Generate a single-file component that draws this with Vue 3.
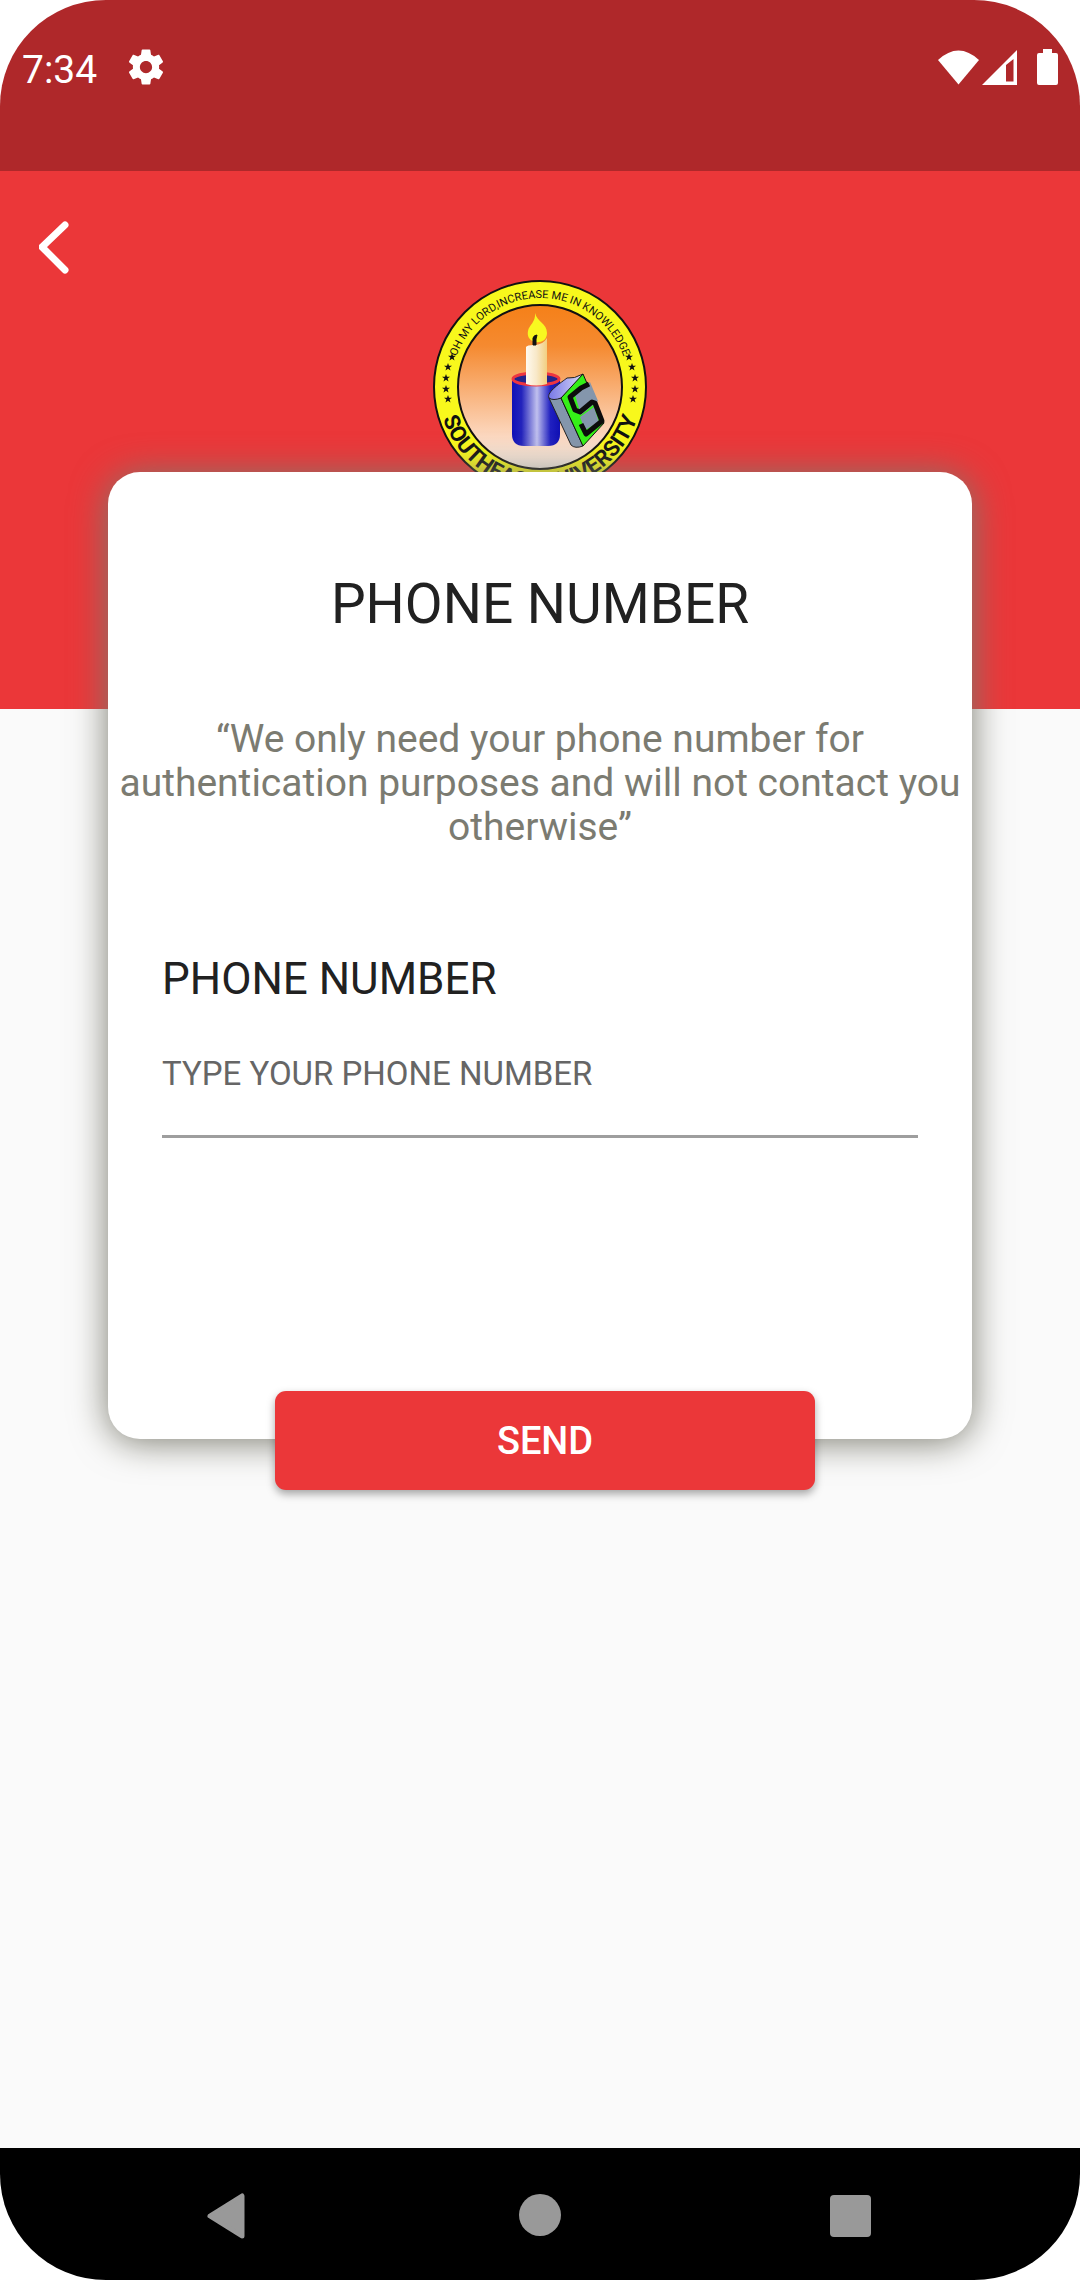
<script setup>
import { ref } from 'vue'

const phone = ref('')

const stars = [
  [20, 78], [16, 88], [14, 99], [14, 110], [16, 120],
  [197, 78], [200, 88], [203, 99], [203, 110], [201, 120],
]
</script>

<template>
  <div class="screen">
    <header class="status">
      <div class="status-group">
        <time class="clock">7:34</time>
        <svg class="gear" viewBox="0 0 24 24" aria-hidden="true">
          <path fill="#fff" d="M19.43 12.98c.04-.32.07-.64.07-.98s-.03-.66-.07-.98l2.11-1.65c.19-.15.24-.42.12-.64l-2-3.46c-.12-.22-.39-.3-.61-.22l-2.49 1c-.52-.4-1.08-.73-1.69-.98l-.38-2.65C14.46 2.18 14.25 2 14 2h-4c-.25 0-.46.18-.49.42l-.38 2.65c-.61.25-1.17.59-1.69.98l-2.49-1c-.23-.09-.49 0-.61.22l-2 3.46c-.13.22-.07.49.12.64l2.11 1.65c-.04.32-.07.65-.07.98s.03.66.07.98l-2.11 1.65c-.19.15-.24.42-.12.64l2 3.46c.12.22.39.3.61.22l2.49-1c.52.4 1.08.73 1.69.98l.38 2.65c.03.24.24.42.49.42h4c.25 0 .46-.18.49-.42l.38-2.65c.61-.25 1.17-.59 1.69-.98l2.49 1c.23.09.49 0 .61-.22l2-3.46c.12-.22.07-.49-.12-.64l-2.11-1.65zM12 15.5c-1.93 0-3.5-1.57-3.5-3.5s1.57-3.5 3.5-3.5 3.5 1.57 3.5 3.5-1.57 3.5-3.5 3.5z" />
        </svg>
      </div>
      <svg class="signals" viewBox="0 0 122 38" aria-hidden="true">
        <g fill="#fff">
          <path d="M0 11Q20.500-8 41 11L20.500 35.500Z" />
          <path fill-rule="evenodd" d="M44 36L79 1V36ZM68 16V32.500H75.500V10Z" />
          <path d="M105 0H114V4H118Q120 4 120 6V34Q120 36 118 36H101Q99 36 99 34V6Q99 4 101 4H105Z" />
        </g>
      </svg>
    </header>

    <section class="hero">
      <button class="back" type="button" aria-label="Back">
        <svg viewBox="0 0 32 56">
          <path d="M26 6L3 28L26 51" fill="none" stroke="#fff" stroke-width="7" stroke-linecap="round" stroke-linejoin="round" />
        </svg>
      </button>
      <svg class="logo" viewBox="0 0 216 216" role="img" aria-label="Southeast University">
        <defs>
          <linearGradient id="sky" x1="0" y1="0" x2="0" y2="1">
            <stop offset="0" stop-color="#f58018" />
            <stop offset="0.25" stop-color="#f58a30" />
            <stop offset="0.8" stop-color="#fcd8c0" />
            <stop offset="1" stop-color="#f4ece6" />
          </linearGradient>
          <linearGradient id="cup">
            <stop offset="0" stop-color="#1010b8" />
            <stop offset="0.2" stop-color="#2424bc" />
            <stop offset="0.52" stop-color="#c0c0ee" />
            <stop offset="0.8" stop-color="#2020c0" />
            <stop offset="1" stop-color="#1010b4" />
          </linearGradient>
          <linearGradient id="wax">
            <stop offset="0" stop-color="#fffaf0" />
            <stop offset="0.5" stop-color="#f8e8c8" />
            <stop offset="1" stop-color="#f2cf80" />
          </linearGradient>
          <linearGradient id="pages">
            <stop offset="0" stop-color="#7878e8" />
            <stop offset="1" stop-color="#d8d8f4" />
          </linearGradient>
          <path id="motto" d="M19 108A89 89 0 0 1 197 108" />
          <path id="name" d="M6 108A102 102 0 0 0 210 108" />
          <path id="star" d="M0-4L1-1.200H4L1.600 .600L2.500 3.500L0 1.700L-2.500 3.500L-1.600 .600L-4-1.200H-1Z" />
        </defs>
        <circle cx="108" cy="108" r="106" fill="#f8f81c" stroke="#111" stroke-width="2" />
        <circle cx="108" cy="108" r="82" fill="url(#sky)" stroke="#111" stroke-width="2" />
        <text class="motto" text-anchor="middle">
          <textPath href="#motto" startOffset="50%">OH MY LORD,INCREASE ME IN KNOWLEDGE</textPath>
        </text>
        <text class="name" text-anchor="middle">
          <textPath href="#name" startOffset="50%">SOUTHEAST UNIVERSITY</textPath>
        </text>
        <use v-for="([x, y], i) in stars" :key="i" href="#star" :x="x" :y="y" fill="#111" />

        <path d="M80 100H128V155Q128 167 116 167H92Q80 167 80 155Z" fill="url(#cup)" />
        <ellipse cx="104" cy="100" rx="23" ry="6" fill="#24248c" stroke="#ee3540" stroke-width="3" />
        <path d="M94 68Q95 66 102 66Q111 66 115 59V105Q104 108 94 105Z" fill="url(#wax)" />
        <path d="M103 34C105 43 115 44 115 54C115 62 108 64 103 63C97 61 95 57 96 52C97 46 104 43 103 34Z" fill="#f8f820" />
        <path d="M101 66V59Q102 56 105 56L104 60V66Z" fill="#111" stroke="#111" />

        <path d="M117 119L139 166Q143 170 151 167L129 119Z" fill="#8496ac" stroke="#222" />
        <path d="M117 119C114 113 130 103 135 99Q142 100 151 95Q143 108 129 119Q121 122 117 119Z" fill="url(#pages)" stroke="#222" />
        <path d="M129 119L151 95L172 144L151 167Z" fill="#35f018" stroke="#111" />
        <path d="M143 116L158 103L166 122L149 136ZM148 138L162 128L167 143L153 151Z" fill="#8496ac" />
        <path d="M157 105L149 109L138 118L143 131L148 133L160 123L163 124L170 142L154 155L149 145" fill="none" stroke="#0c0c0c" stroke-width="5" stroke-linejoin="round" />
      </svg>
    </section>

    <main class="content">
      <form class="card" @submit.prevent>
        <h1 class="title">PHONE NUMBER</h1>
        <p class="note">“We only need your phone number for authentication purposes and will not contact you otherwise”</p>
        <div class="field">
          <label class="label" for="phone">PHONE NUMBER</label>
          <input id="phone" v-model="phone" class="input" type="tel" placeholder="TYPE YOUR PHONE NUMBER" />
        </div>
        <button class="send" type="submit">SEND</button>
      </form>
    </main>

    <nav class="navbar" aria-label="System">
      <button class="nav-button" type="button" aria-label="Back">
        <svg viewBox="0 0 48 48"><path d="M7 24L39 4V44Z" fill="#999" stroke="#999" stroke-width="5" stroke-linejoin="round" /></svg>
      </button>
      <button class="nav-button" type="button" aria-label="Home">
        <svg viewBox="0 0 48 48"><circle cx="24" cy="23" r="21" fill="#999" /></svg>
      </button>
      <button class="nav-button" type="button" aria-label="Recent apps">
        <svg viewBox="0 0 48 48"><rect x="1" y="3" width="41" height="42" rx="4" fill="#999" /></svg>
      </button>
    </nav>
  </div>
</template>

<style>
body {
  margin: 0;
  background: #fff;
}
</style>

<style scoped>
.screen {
  display: flex;
  flex-direction: column;
  min-height: 100vh;
  overflow: hidden;
  border-radius: 106px;
  background: #fafafa;
  font-family: Roboto, "Liberation Sans", sans-serif;
  color: #212121;
}

button {
  border: 0;
  padding: 0;
  background: none;
  font-family: inherit;
  cursor: pointer;
}

svg {
  display: block;
}

.status {
  display: flex;
  justify-content: space-between;
  align-items: flex-start;
  box-sizing: border-box;
  height: 171px;
  padding: 46px 20px 0 22px;
  background: #af282a;
}

.status-group {
  display: flex;
  align-items: flex-start;
  gap: 28px;
}

.clock {
  font-size: 39px;
  line-height: 48px;
  color: #fff;
}

.gear {
  width: 42px;
  height: 42px;
}

.signals {
  width: 122px;
  height: 38px;
  margin-top: 3px;
}

.hero {
  display: flex;
  flex-direction: column;
  box-sizing: border-box;
  height: 538px;
  padding: 48px 39px 0;
  background: #eb3739;
}

.back {
  width: 32px;
  height: 56px;
}

.logo {
  align-self: center;
  width: 216px;
  height: 216px;
  margin-top: 4px;
}

.motto {
  font: 11px Roboto, sans-serif;
  fill: #111;
}

.name {
  font: bold 22px Roboto, sans-serif;
  fill: #111;
}

.content {
  flex: 1;
}

.card {
  position: relative;
  display: flex;
  flex-direction: column;
  box-sizing: border-box;
  width: 80%;
  min-height: 967px;
  margin: -237px auto 0;
  padding-top: 99px;
  border-radius: 32px;
  background: #fff;
  box-shadow: 0 3px 36px #7b7b6f;
}

.title {
  margin: 0;
  font-size: 55px;
  font-weight: 400;
  line-height: 66px;
  text-align: center;
}

.note {
  margin: 80px 8px 0;
  font-size: 39px;
  line-height: 44px;
  text-align: center;
  color: #7b7b71;
}

.field {
  display: flex;
  flex-direction: column;
  margin: 103px 54px 0;
}

.label {
  font-size: 44px;
  line-height: 54px;
}

.input {
  height: 78px;
  margin-top: 28px;
  padding: 0 0 23px;
  border: 0;
  border-bottom: 3px solid #9e9e9e;
  outline: 0;
  background: none;
  font-family: inherit;
  font-size: 33px;
  color: inherit;
}

.input::placeholder {
  color: #666;
  opacity: 1;
}

.send {
  width: 540px;
  height: 99px;
  margin: auto 0 -51px 167px;
  border-radius: 11px;
  background: #eb3739;
  box-shadow: 0 4px 8px rgba(0, 0, 0, 0.35);
  font-size: 38px;
  font-weight: 500;
  color: #fff;
}

.navbar {
  display: grid;
  grid-template-columns: repeat(3, 1fr);
  place-items: center;
  height: 132px;
  padding: 0 70px;
  background: #000;
}

.nav-button {
  width: 48px;
  height: 48px;
  margin-top: 4px;
}
</style>
